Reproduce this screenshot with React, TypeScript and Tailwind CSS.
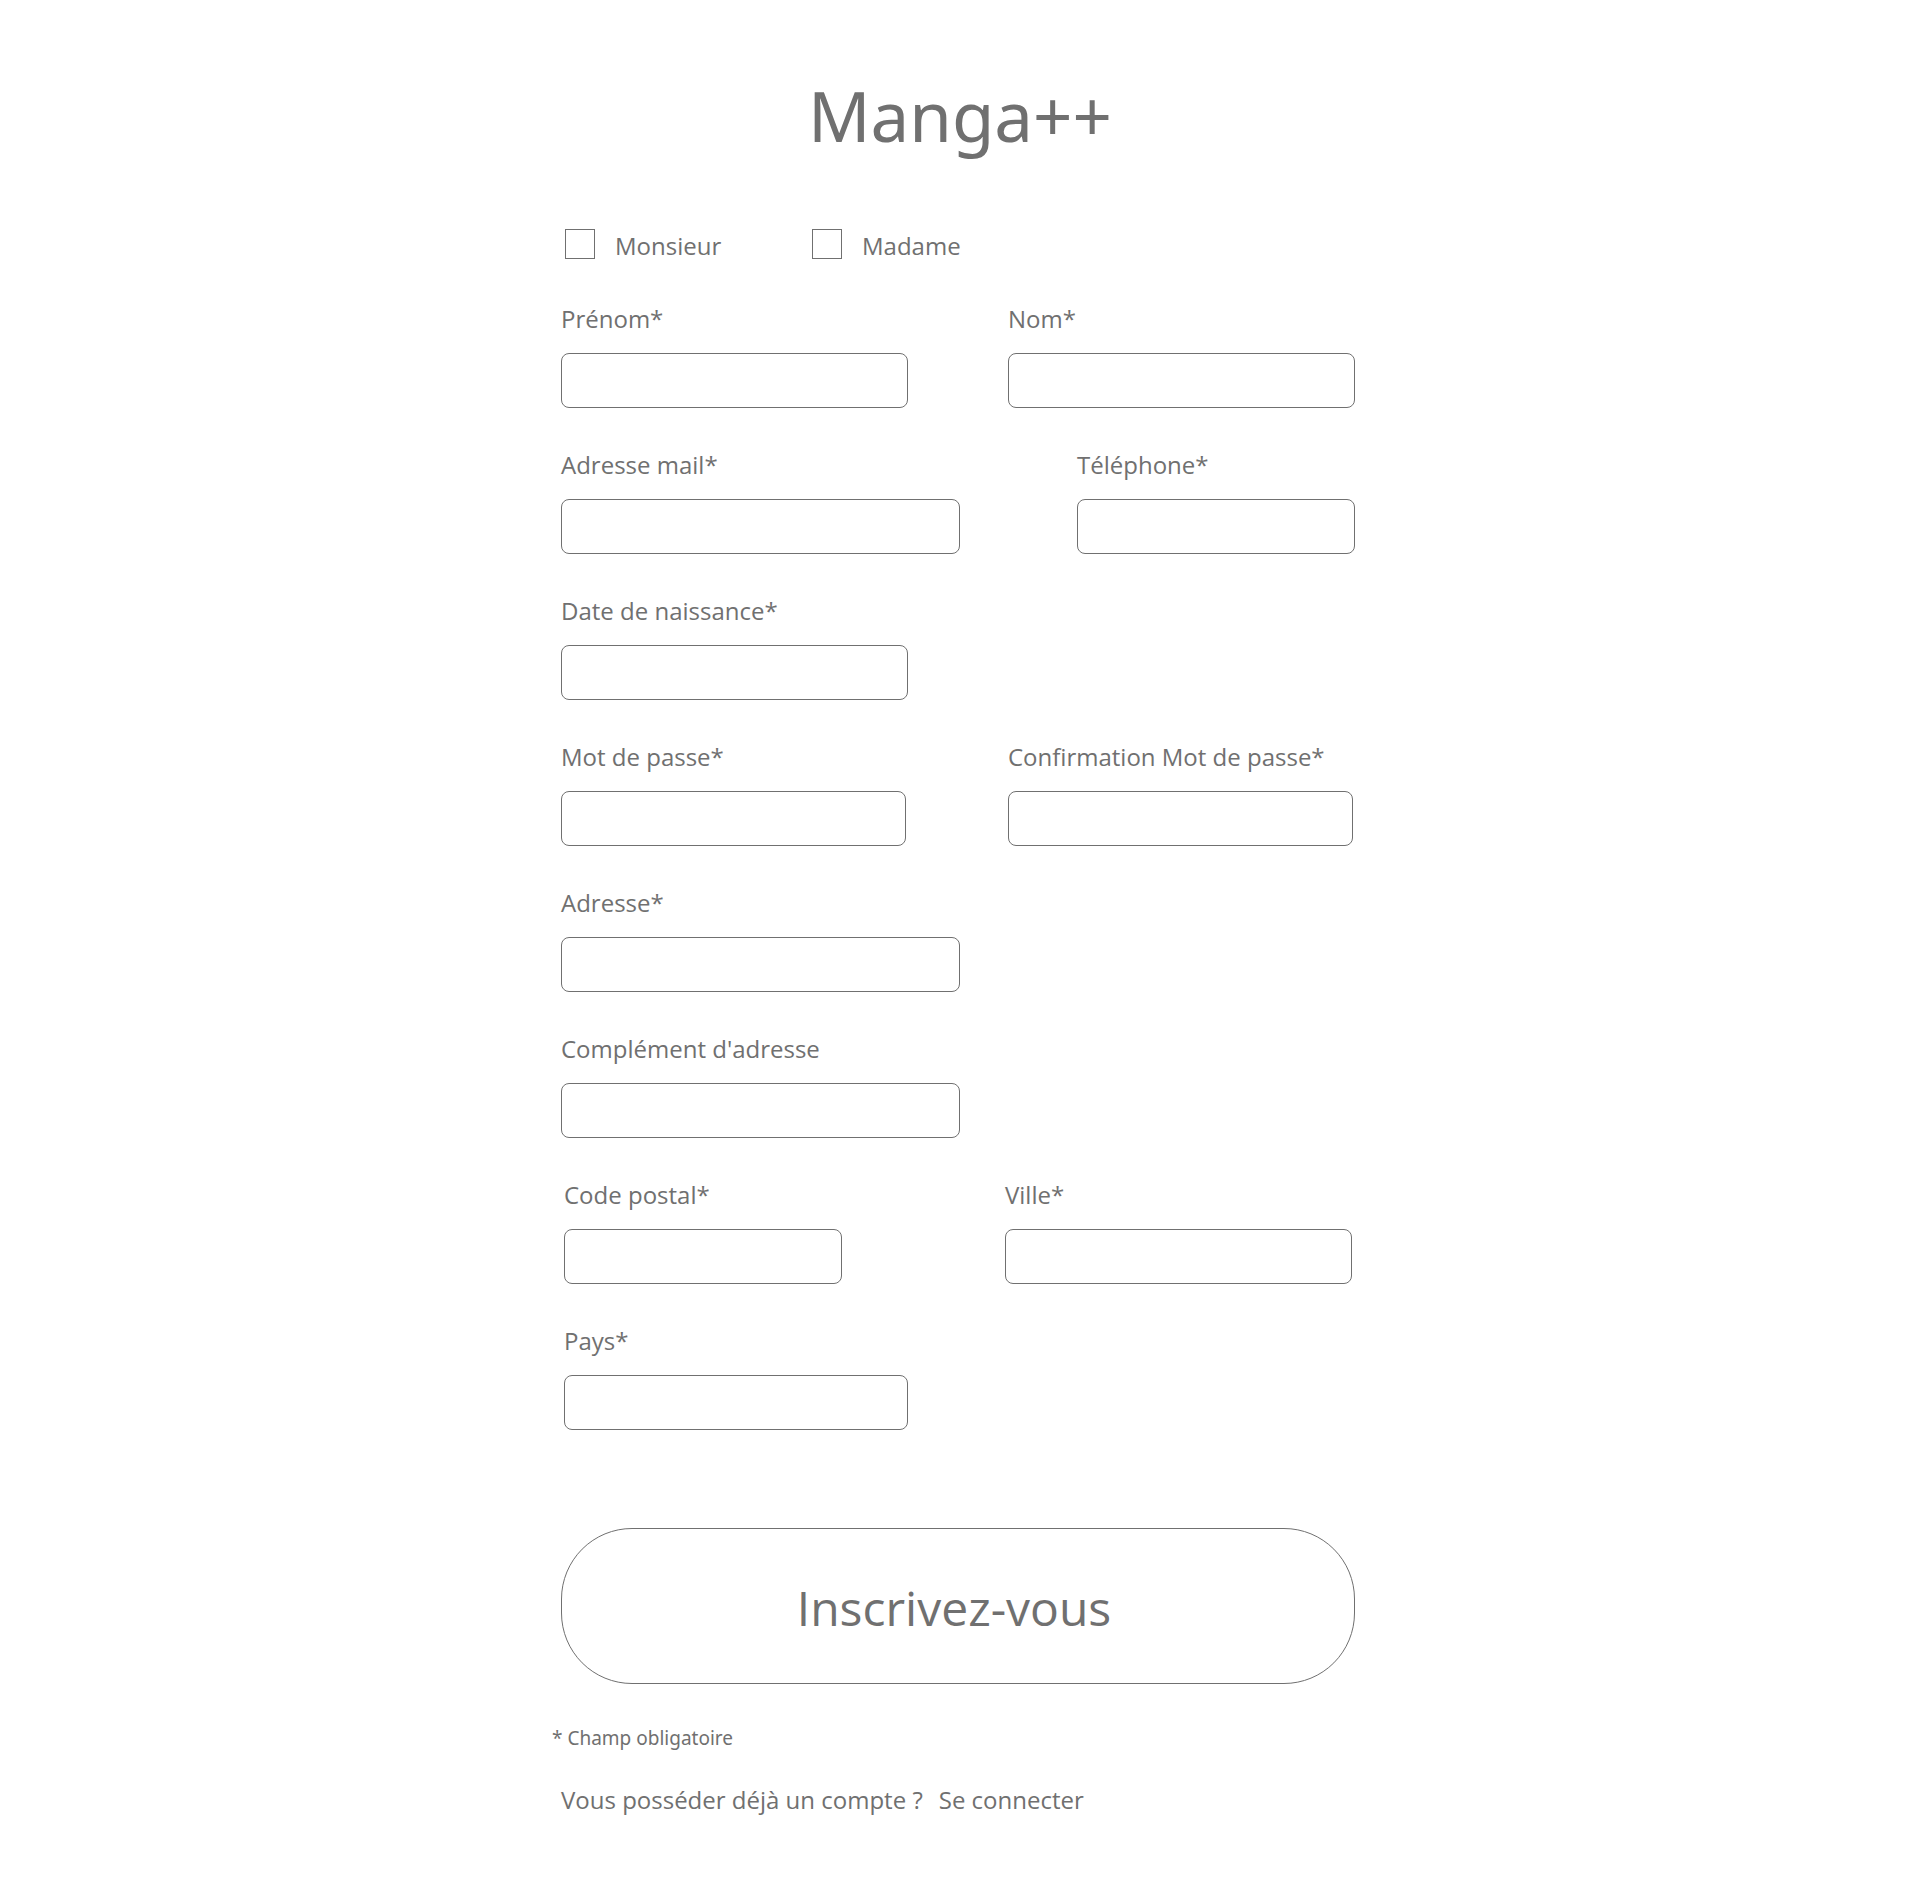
import { useId } from "react";

type FieldProps = {
  label: string;
  type?: string;
  className: string;
};

function Field({ label, type = "text", className }: FieldProps) {
  const id = useId();
  return (
    <div className={`flex flex-col gap-[18px] ${className}`}>
      <label htmlFor={id} className="whitespace-nowrap">
        {label}
      </label>
      <input
        id={id}
        type={type}
        className="h-[55px] w-full rounded-lg border border-[#707070] bg-white px-4 outline-none"
      />
    </div>
  );
}

function Choice({ label }: { label: string }) {
  return (
    <label className="flex w-[247px] items-center gap-5">
      <input
        type="checkbox"
        className="size-[30px] shrink-0 appearance-none border border-[#707070] bg-white checked:bg-[#707070]"
      />
      <span className="pt-1">{label}</span>
    </label>
  );
}

export default function App() {
  return (
    <main className="min-h-screen bg-white pt-[75px] pb-16 font-['Open_Sans','Noto_Sans',sans-serif] text-[24px] leading-8 text-[#707070]">
      <h1 className="text-center font-['Noto_Sans','Open_Sans',sans-serif] text-[69px] leading-[80px]">Manga++</h1>

      <div className="mx-auto max-w-[816px]">
        <form className="mt-[71px] flex flex-col gap-[41px] pr-[13px] pl-[9px]">
          <div className="flex pl-1">
            <Choice label="Monsieur" />
            <Choice label="Madame" />
          </div>
          <div className="flex justify-between">
            <Field label="Prénom*" className="w-[347px]" />
            <Field label="Nom*" className="w-[347px]" />
          </div>
          <div className="flex justify-between">
            <Field label="Adresse mail*" type="email" className="w-[399px]" />
            <Field label="Téléphone*" type="tel" className="w-[278px]" />
          </div>
          <Field label="Date de naissance*" className="w-[347px]" />
          <div className="flex gap-[102px]">
            <Field label="Mot de passe*" type="password" className="w-[345px]" />
            <Field label="Confirmation Mot de passe*" type="password" className="w-[345px]" />
          </div>
          <Field label="Adresse*" className="w-[399px]" />
          <Field label="Complément d'adresse" className="w-[399px]" />
          <div className="flex flex-col gap-[41px] px-[3px]">
            <div className="flex justify-between">
              <Field label="Code postal*" className="w-[278px]" />
              <Field label="Ville*" className="w-[347px]" />
            </div>
            <Field label="Pays*" className="w-[344px]" />
          </div>
          <button
            type="submit"
            className="mt-[57px] h-[156px] w-full rounded-[71px] border border-[#707070] pt-1 pr-2 text-[48px]"
          >
            Inscrivez-vous
          </button>
        </form>

        <p className="mt-10 font-['Noto_Sans','Open_Sans',sans-serif] text-[19px] leading-7">
          * Champ obligatoire
        </p>
        <p className="mt-8 flex gap-4 pl-[9px]">
          <span>Vous posséder déjà un compte ?</span>
          <a href="#connexion">Se connecter</a>
        </p>
      </div>
    </main>
  );
}
